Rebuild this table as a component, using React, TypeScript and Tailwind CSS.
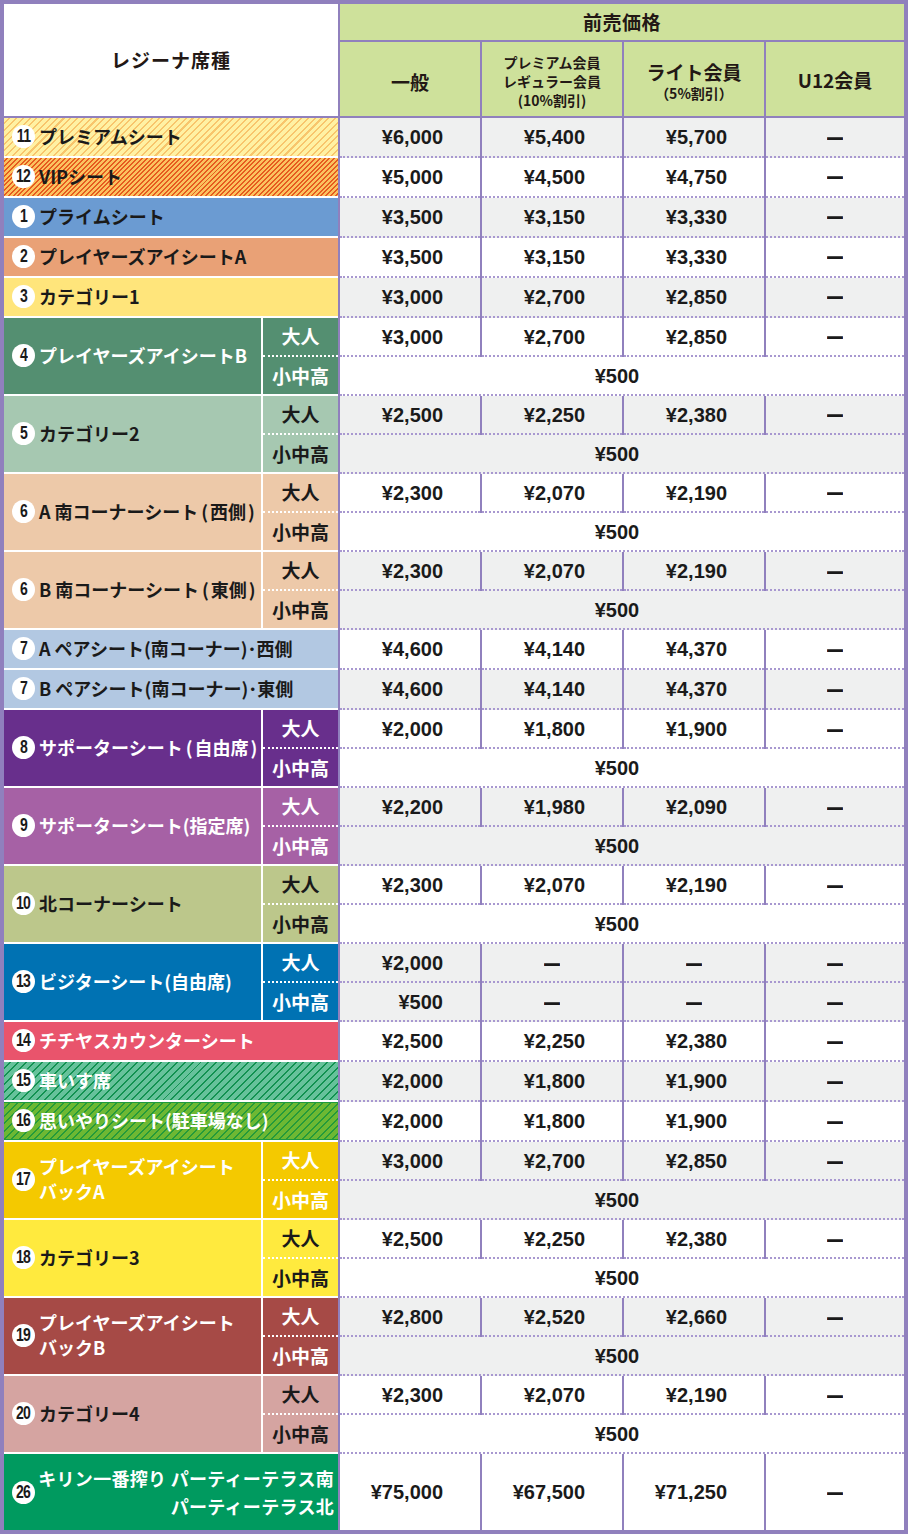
import type { ReactNode } from "react";

// レジーナ席種 × 前売価格 の料金表
type Seat = {
  no: string;
  name: ReactNode;
  bg: string;
  light?: boolean; // 白文字
  grey?: boolean; // 価格欄の地色
  adult: string[];
  kid?: "span" | string[]; // 小中高: ¥500 の結合セル or 個別
  tall?: boolean; // 最終行（大人/小中高なしの2段）
};

const D = "—";
const COLS = ["w-[140px]", "w-[140px]", "w-[140px]", "w-[138px]"];
const DOT = "border-b-2 border-dotted border-[#a898d0]";

// 全角より詰めた括弧
const P = ({ children }: { children: ReactNode }) => (
  <>
    <span className="ml-[3px] mr-[2px]">(</span>
    {children}
    <span className="ml-[2px]">)</span>
  </>
);

const SEATS: Seat[] = [
  { no: "11", name: "プレミアムシート", bg: "bg-[#fff1a3] [background-image:repeating-linear-gradient(135deg,#fff1a3_0px,#fff1a3_3.3px,#f8c56c_3.3px,#f8c56c_4.8px)]", grey: true, adult: ["¥6,000", "¥5,400", "¥5,700", D] },
  { no: "12", name: "VIPシート", bg: "bg-[#fbc25f] [background-image:repeating-linear-gradient(135deg,#fbc25f_0px,#fbc25f_2px,#e65b20_2px,#e65b20_3.4px)]", adult: ["¥5,000", "¥4,500", "¥4,750", D] },
  { no: "1", name: "プライムシート", bg: "bg-[#6b9bd2]", grey: true, adult: ["¥3,500", "¥3,150", "¥3,330", D] },
  { no: "2", name: "プレイヤーズアイシートA", bg: "bg-[#e9a176]", adult: ["¥3,500", "¥3,150", "¥3,330", D] },
  { no: "3", name: "カテゴリー1", bg: "bg-[#ffe57b]", grey: true, adult: ["¥3,000", "¥2,700", "¥2,850", D] },
  { no: "4", name: "プレイヤーズアイシートB", bg: "bg-[#548f71]", light: true, adult: ["¥3,000", "¥2,700", "¥2,850", D], kid: "span" },
  { no: "5", name: "カテゴリー2", bg: "bg-[#a6c8b1]", grey: true, adult: ["¥2,500", "¥2,250", "¥2,380", D], kid: "span" },
  { no: "6", name: <>A 南コーナーシート<P>西側</P></>, bg: "bg-[#edc9a9]", adult: ["¥2,300", "¥2,070", "¥2,190", D], kid: "span" },
  { no: "6", name: <>B 南コーナーシート<P>東側</P></>, bg: "bg-[#edc9a9]", grey: true, adult: ["¥2,300", "¥2,070", "¥2,190", D], kid: "span" },
  { no: "7", name: "A ペアシート(南コーナー)･西側", bg: "bg-[#b2c8e2]", adult: ["¥4,600", "¥4,140", "¥4,370", D] },
  { no: "7", name: "B ペアシート(南コーナー)･東側", bg: "bg-[#b2c8e2]", grey: true, adult: ["¥4,600", "¥4,140", "¥4,370", D] },
  { no: "8", name: <>サポーターシート<P>自由席</P></>, bg: "bg-[#682f8c]", light: true, adult: ["¥2,000", "¥1,800", "¥1,900", D], kid: "span" },
  { no: "9", name: "サポーターシート(指定席)", bg: "bg-[#a661a5]", light: true, grey: true, adult: ["¥2,200", "¥1,980", "¥2,090", D], kid: "span" },
  { no: "10", name: "北コーナーシート", bg: "bg-[#bcc78b]", adult: ["¥2,300", "¥2,070", "¥2,190", D], kid: "span" },
  { no: "13", name: "ビジターシート(自由席)", bg: "bg-[#0072b3]", light: true, grey: true, adult: ["¥2,000", D, D, D], kid: ["¥500", D, D, D] },
  { no: "14", name: "チチヤスカウンターシート", bg: "bg-[#e9546c]", light: true, adult: ["¥2,500", "¥2,250", "¥2,380", D] },
  { no: "15", name: "車いす席", bg: "bg-[#66c29b] [background-image:repeating-linear-gradient(135deg,#66c29b_0px,#66c29b_4.2px,#129251_4.2px,#129251_5.6px)]", light: true, grey: true, adult: ["¥2,000", "¥1,800", "¥1,900", D] },
  { no: "16", name: "思いやりシート(駐車場なし)", bg: "bg-[#6db833] [background-image:repeating-linear-gradient(135deg,#6db833_0px,#6db833_4px,#259a3a_4px,#259a3a_5.4px)] shadow-[inset_0_1px_0_#1f9a3c,inset_0_-1px_0_#1f9a3c]", light: true, adult: ["¥2,000", "¥1,800", "¥1,900", D] },
  { no: "17", name: <>プレイヤーズアイシート<br />バックA</>, bg: "bg-[#f4c900]", light: true, grey: true, adult: ["¥3,000", "¥2,700", "¥2,850", D], kid: "span" },
  { no: "18", name: "カテゴリー3", bg: "bg-[#ffea3e]", adult: ["¥2,500", "¥2,250", "¥2,380", D], kid: "span" },
  { no: "19", name: <>プレイヤーズアイシート<br />バックB</>, bg: "bg-[#a64a46]", light: true, grey: true, adult: ["¥2,800", "¥2,520", "¥2,660", D], kid: "span" },
  { no: "20", name: "カテゴリー4", bg: "bg-[#d5a4a1]", adult: ["¥2,300", "¥2,070", "¥2,190", D], kid: "span" },
  { no: "26", name: <>キリン一番搾り パーティーテラス南<br />パーティーテラス北</>, bg: "bg-[#009a5f]", light: true, adult: ["¥75,000", "¥67,500", "¥71,250", D], tall: true },
];

function Num({ n }: { n: string }) {
  return (
    <span className="flex h-[23px] w-[23px] shrink-0 items-center justify-center rounded-full bg-white text-[#1a1a1a]">
      <span className="inline-block scale-x-[0.78] font-['Liberation_Sans',sans-serif] text-[18px] font-bold leading-none tracking-[-1px]">{n}</span>
    </span>
  );
}

function Name({ s }: { s: Seat }) {
  return (
    <div className="flex items-center gap-[4px] whitespace-nowrap pb-[2px] text-[18px] font-bold leading-[25px]">
      <Num n={s.no} />
      <span>{s.name}</span>
    </div>
  );
}

function Cells({ values, h, grey, line = true }: { values: string[]; h: string; grey?: boolean; line?: boolean }) {
  return (
    <div className="flex gap-[2px]">
      {values.map((v, i) => (
        <div
          key={i}
          className={`flex ${h} ${COLS[i]} items-center font-['Liberation_Sans','Noto_Sans_CJK_JP',sans-serif] ${v === D ? "justify-center" : "justify-end pr-[37px]"} ${grey ? "bg-[#eff0f0]" : "bg-white"} ${line ? DOT : ""}`}
        >
          {v === D ? <span className="inline-block scale-y-[1.7] text-[16px]">—</span> : v}
        </div>
      ))}
    </div>
  );
}

function Row({ s }: { s: Seat }) {
  const txt = s.light ? "text-white" : "text-[#1a1a1a]";
  const priceBg = s.grey ? "bg-[#eff0f0]" : "bg-white";

  if (s.tall) {
    return (
      <div className="flex gap-[2px]">
        <div className={`flex h-[76px] w-[334px] items-center gap-[2px] pl-[8px] pr-[4px] ${s.bg} ${txt}`}>
          <Num n={s.no} />
          <span className="flex-1 whitespace-nowrap text-right text-[18px] font-bold leading-[28px] tracking-[0.3px]">{s.name}</span>
        </div>
        <Cells values={s.adult} h="h-[76px]" grey={s.grey} line={false} />
      </div>
    );
  }

  if (!s.kid) {
    return (
      <div className="flex gap-[2px]">
        <div className={`flex h-[40px] w-[334px] items-center border-b-2 border-white pl-[8px] ${s.bg} ${txt}`}>
          <Name s={s} />
        </div>
        <Cells values={s.adult} h="h-[40px]" grey={s.grey} />
      </div>
    );
  }

  return (
    <div className="flex gap-[2px]">
      <div className={`flex h-[78px] w-[334px] border-b-2 border-white ${s.bg} ${txt}`}>
        <div className="flex w-[259px] items-center overflow-hidden border-r-2 border-white pl-[8px]">
          <Name s={s} />
        </div>
        <div className="flex w-[75px] flex-col text-[19px] font-bold leading-none">
          <div className="flex h-[39px] items-center justify-center border-b-2 border-dotted border-white pb-[2px]">大人</div>
          <div className="flex h-[37px] items-center justify-center">小中高</div>
        </div>
      </div>
      <div className="flex w-[564px] flex-col">
        <Cells values={s.adult} h="h-[39px]" grey={s.grey} />
        {s.kid === "span" ? (
          <div className={`flex h-[39px] items-center justify-center pr-[10px] font-['Liberation_Sans','Noto_Sans_CJK_JP',sans-serif] ${priceBg} ${DOT}`}>¥500</div>
        ) : (
          <Cells values={s.kid} h="h-[39px]" grey={s.grey} />
        )}
      </div>
    </div>
  );
}

export default function App() {
  const green = "bg-[#cee19b]";
  return (
    <div className="w-[908px] bg-[#9080bd] p-[4px] font-['Noto_Sans_CJK_JP',sans-serif] text-[#1a1a1a]">
      {/* 見出し */}
      <div className="mb-[2px] flex gap-[2px] text-[#231815]">
        <div className="flex h-[112px] w-[334px] items-center justify-center bg-white text-[19px] font-bold tracking-[1px]">レジーナ席種</div>
        <div className="flex w-[564px] flex-col gap-[2px]">
          <div className={`flex h-[36px] items-center justify-center ${green} text-[19px] font-bold tracking-[0.5px]`}>前売価格</div>
          <div className="flex h-[74px] gap-[2px]">
            <div className={`flex w-[140px] items-center justify-center pt-[7px] ${green} text-[19px] font-bold`}>一般</div>
            <div className={`flex w-[140px] flex-col items-center justify-center pt-[4px] ${green} text-[14px] font-bold leading-[19px]`}>
              <span>プレミアム会員</span>
              <span>レギュラー会員</span>
              <span>(10%割引)</span>
            </div>
            <div className={`flex w-[140px] flex-col items-center justify-center pt-[4px] ${green}`}>
              <span className="text-[19px] font-bold leading-[24px]">ライト会員</span>
              <span className="text-[14px] font-bold leading-[18px]">（5%割引）</span>
            </div>
            <div className={`flex w-[138px] items-center justify-center pt-[2px] ${green} text-[19px] font-bold`}>U12会員</div>
          </div>
        </div>
      </div>

      {/* 料金 */}
      <div className="flex flex-col text-[20px] font-bold leading-none">
        {SEATS.map((s, i) => (
          <Row key={i} s={s} />
        ))}
      </div>
    </div>
  );
}
